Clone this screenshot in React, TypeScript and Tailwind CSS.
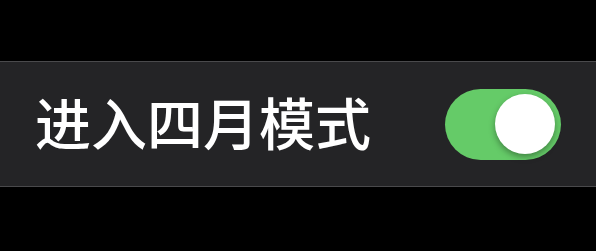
export default function App() {
  return (
    <div className="h-[251px] w-full bg-black pt-[61px]">
      <div className="flex h-[126px] items-center justify-between border-y border-[#4a4a4c] bg-[#242426] pl-[35px] pr-[35px]">
        <span className="pb-[6px] font-['Noto_Sans_CJK_SC',sans-serif] text-[56px] leading-none font-medium text-white">
          进入四月模式
        </span>
        <button
          type="button"
          aria-pressed="true"
          className="flex h-[71px] w-[116px] items-center justify-end rounded-full bg-[#65cb68] pr-[6px]"
        >
          <span className="h-[60px] w-[60px] rounded-full bg-white shadow-[0_3px_6px_rgba(0,0,0,0.35)]" />
        </button>
      </div>
    </div>
  );
}
